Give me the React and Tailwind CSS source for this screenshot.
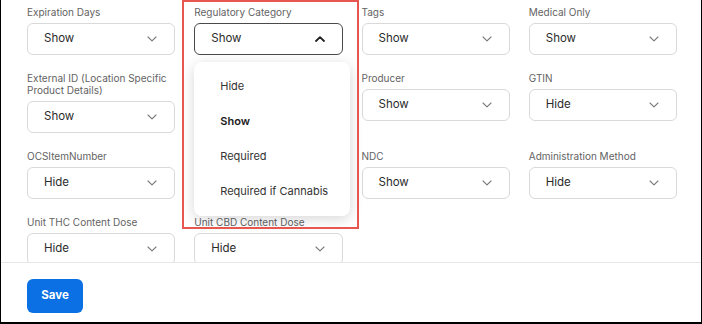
import { useState } from "react";

const FIELDS = [
  { label: "Expiration Days", value: "Show" },
  { label: "Regulatory Category", value: "Show", open: true },
  { label: "Tags", value: "Show" },
  { label: "Medical Only", value: "Show" },
  { label: "External ID (Location Specific Product Details)", value: "Show" },
  null,
  { label: "Producer", value: "Show" },
  { label: "GTIN", value: "Hide" },
  { label: "OCSItemNumber", value: "Hide" },
  null,
  { label: "NDC", value: "Show" },
  { label: "Administration Method", value: "Hide" },
  { label: "Unit THC Content Dose", value: "Hide" },
  { label: "Unit CBD Content Dose", value: "Hide" },
];

const OPTIONS = ["Hide", "Show", "Required", "Required if Cannabis"];

function Chevron({ up }) {
  return up ? (
    <svg width="10" height="6" viewBox="0 0 10 6" fill="none">
      <path d="M1 5L5 1.2L9 5" stroke="#1f1f1f" strokeWidth="1.8" strokeLinecap="round" strokeLinejoin="round" />
    </svg>
  ) : (
    <svg width="10" height="6" viewBox="0 0 10 6" fill="none">
      <path d="M1 1L5 4.8L9 1" stroke="#7a7a7a" strokeWidth="1.1" strokeLinecap="round" strokeLinejoin="round" />
    </svg>
  );
}

function SelectField({ field }) {
  const [selected, setSelected] = useState(field.value);

  return (
    <div className="relative">
      <p className="text-[10px] leading-[12px] text-[#636363] mb-[5px]">{field.label}</p>
      <div
        className={
          "h-[32px] rounded-[6px] bg-white flex items-center justify-between pl-[16px] pr-[17px] text-[11.5px] text-[#2b2b2b] " +
          (field.open ? "border border-[#4a4a4a]" : "border border-[#d9d9d9]")
        }
      >
        <span>{selected}</span>
        <Chevron up={field.open} />
      </div>

      {field.open && (
        <div className="absolute left-0 top-[56px] w-[156px] z-20 bg-white rounded-[8px] shadow-[0_3px_14px_rgba(0,0,0,0.16)] py-[7px]">
          {OPTIONS.map((opt) => (
            <button
              key={opt}
              onClick={() => setSelected(opt)}
              className={
                "w-full h-[35px] flex items-center pl-[26px] text-left text-[11px] " +
                (opt === selected ? "font-semibold text-[#1c1c1c]" : "text-[#333333]")
              }
            >
              {opt}
            </button>
          ))}
        </div>
      )}
    </div>
  );
}

export default function App() {
  return (
    <div
      className="w-[702px] h-[324px] bg-white border-x border-b-2 border-black flex flex-col overflow-hidden"
      style={{ fontFamily: "Inter, 'Noto Sans', sans-serif" }}
    >
      <div className="relative h-[262px] shrink-0 overflow-hidden">
        <div className="grid grid-cols-4 gap-x-[19px] gap-y-[17px] items-start pl-[26px] pr-[24px] pt-[6px]">
          {FIELDS.map((f, idx) => (f ? <SelectField key={idx} field={f} /> : <div key={idx} />))}
        </div>

        {/* highlight frame round the open dropdown */}
        <div className="absolute left-[181px] top-0 w-[177px] h-[229px] border-[2.5px] border-[#e8574f] z-30 pointer-events-none" />
      </div>

      <div className="flex-1 border-t border-[#e6e6e6] pl-[26px] pt-[16px]">
        <button className="w-[56px] h-[34px] rounded-[6px] bg-[#0b70e3] text-white text-[11.5px] font-bold">
          Save
        </button>
      </div>
    </div>
  );
}
